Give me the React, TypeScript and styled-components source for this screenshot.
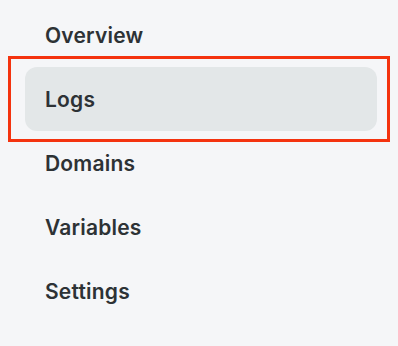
import * as React from "react";
import styled, { createGlobalStyle } from "styled-components";

const GlobalStyle = createGlobalStyle`
  html, body {
    margin: 0;
    padding: 0;
    background: #f5f6f8;
  }
  body {
    font-family: Inter, "Noto Sans", sans-serif;
  }
`;

const Nav = styled.nav`
  display: flex;
  flex-direction: column;
  padding: 3px 21px 0 25px;
  width: 398px;
  height: 346px;
  box-sizing: border-box;
`;

const Item = styled.a<{ $active?: boolean }>`
  position: relative;
  display: flex;
  align-items: center;
  height: 64px;
  padding-left: 20px;
  border-radius: 12px;
  background: ${(p) => (p.$active ? "#e3e7e8" : "transparent")};
  color: #2d3235;
  font-size: 21px;
  font-weight: 600;
  letter-spacing: 0.2px;
  text-decoration: none;
  cursor: pointer;
`;

const Highlight = styled.span`
  position: absolute;
  left: -17px;
  right: -13px;
  top: -11px;
  bottom: -11px;
  border: 3px solid #f4330f;
  pointer-events: none;
`;

const items = ["Overview", "Logs", "Domains", "Variables", "Settings"];

export default function App() {
  return (
    <>
      <GlobalStyle />
      <Nav>
        {items.map((label) => (
          <Item key={label} $active={label === "Logs"}>
            {label}
            {label === "Logs" && <Highlight />}
          </Item>
        ))}
      </Nav>
    </>
  );
}
